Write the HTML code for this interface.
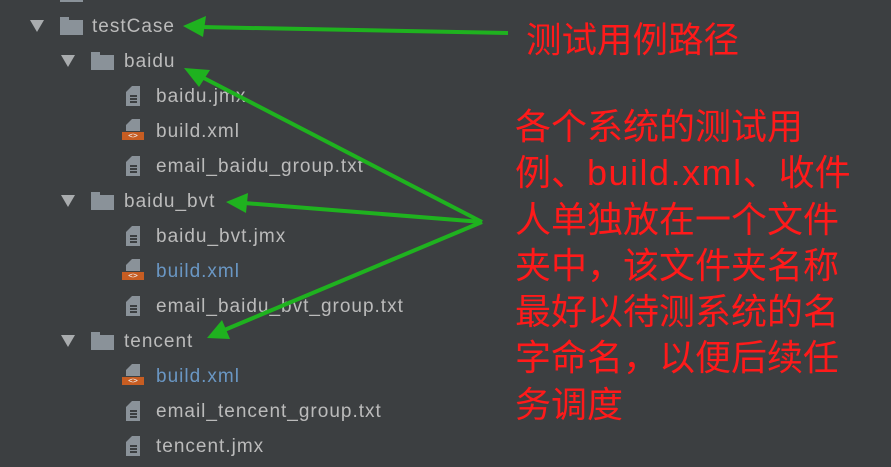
<!DOCTYPE html>
<html><head><meta charset="utf-8"><style>
body{margin:0;width:891px;height:467px;background:#3c3f41;overflow:hidden;position:relative;font-family:"Liberation Sans","DejaVu Sans",sans-serif}
.r{position:absolute;height:35px;line-height:35px;font-size:19px;letter-spacing:1px;color:#bbbbbb;white-space:nowrap}
.b{color:#6a97c4}
.tri{position:absolute;width:0;height:0;border-left:7px solid transparent;border-right:7px solid transparent;border-top:12px solid #a9acae}
.fold{position:absolute;width:23px;height:15px;background:#8a9299}
.fold:before{content:"";position:absolute;left:0;top:-3px;width:9px;height:4px;background:#8a9299}
.file{position:absolute;width:14px;height:20px;background:#8a9299;clip-path:polygon(6px 0,14px 0,14px 20px,0 20px,0 6px)}
.file i{position:absolute;left:4px;width:7px;height:1.5px;background:#3c3f41}
.xml{position:absolute;width:22px;height:8px;background:#c75d22;color:#eee;font-size:8px;line-height:8px;text-align:center;font-family:"DejaVu Sans Mono",monospace}
.red{position:absolute;color:#ff1a1a;font-family:"Liberation Sans","Noto Sans CJK SC",sans-serif;white-space:nowrap}
</style></head><body>
<div class="fold" style="left:60px;top:-13px"></div>

<div class="tri" style="left:30px;top:20px"></div><div class="fold" style="left:60px;top:20px"></div><div class="r" style="left:92px;top:9px">testCase</div>
<div class="tri" style="left:61px;top:55px"></div><div class="fold" style="left:91px;top:55px"></div><div class="r" style="left:124px;top:44px">baidu</div>
<div class="file" style="left:126px;top:86px"><i style="top:9px"></i><i style="top:12px"></i><i style="top:15px"></i></div><div class="r" style="left:156px;top:79px">baidu.jmx</div>
<div class="file" style="left:126px;top:119px;height:12px"></div><div class="xml" style="left:122px;top:132px">&lt;&gt;</div><div class="r" style="left:156px;top:114px">build.xml</div>
<div class="file" style="left:126px;top:156px"><i style="top:9px"></i><i style="top:12px"></i><i style="top:15px"></i></div><div class="r" style="left:156px;top:149px">email_baidu_group.txt</div>
<div class="tri" style="left:61px;top:195px"></div><div class="fold" style="left:91px;top:195px"></div><div class="r" style="left:124px;top:184px">baidu_bvt</div>
<div class="file" style="left:126px;top:226px"><i style="top:9px"></i><i style="top:12px"></i><i style="top:15px"></i></div><div class="r" style="left:156px;top:219px">baidu_bvt.jmx</div>
<div class="file" style="left:126px;top:259px;height:12px"></div><div class="xml" style="left:122px;top:272px">&lt;&gt;</div><div class="r b" style="left:156px;top:254px">build.xml</div>
<div class="file" style="left:126px;top:296px"><i style="top:9px"></i><i style="top:12px"></i><i style="top:15px"></i></div><div class="r" style="left:156px;top:289px">email_baidu_bvt_group.txt</div>
<div class="tri" style="left:61px;top:335px"></div><div class="fold" style="left:91px;top:335px"></div><div class="r" style="left:124px;top:324px">tencent</div>
<div class="file" style="left:126px;top:364px;height:12px"></div><div class="xml" style="left:122px;top:377px">&lt;&gt;</div><div class="r b" style="left:156px;top:359px">build.xml</div>
<div class="file" style="left:126px;top:401px"><i style="top:9px"></i><i style="top:12px"></i><i style="top:15px"></i></div><div class="r" style="left:156px;top:394px">email_tencent_group.txt</div>
<div class="file" style="left:126px;top:436px"><i style="top:9px"></i><i style="top:12px"></i><i style="top:15px"></i></div><div class="r" style="left:156px;top:429px">tencent.jmx</div>

<svg width="891" height="467" style="position:absolute;left:0;top:0">
<g stroke="#1fb21f" stroke-width="4" fill="#1fb21f">
<line x1="508" y1="33" x2="200" y2="27"/>
<polygon points="183,26 206,16 203,37" stroke="none"/>
<line x1="482" y1="222" x2="198" y2="75"/>
<polygon points="184,68 210,70 199,87" stroke="none"/>
<line x1="482" y1="222" x2="244" y2="203"/>
<polygon points="226,202 248,193 246,213" stroke="none"/>
<line x1="482" y1="222" x2="222" y2="331"/>
<polygon points="207,338 222,320 230,339" stroke="none"/>
</g>
</svg>

<div class="red" style="left:526px;top:18px;font-size:35.5px;line-height:44px">测试用例路径</div>
<div class="red" style="left:515px;top:104px;font-size:36px;line-height:46.3px">各个系统的测试用<br>例、<span style="letter-spacing:1.5px">build.xml</span>、收件<br>人单独放在一个文件<br>夹中，该文件夹名称<br>最好以待测系统的名<br>字命名，以便后续任<br>务调度</div>
</body></html>
